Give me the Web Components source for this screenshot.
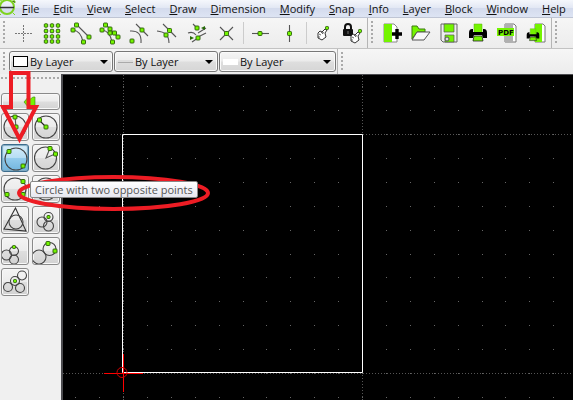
<!DOCTYPE html>
<html lang="en">
<head>
<meta charset="utf-8">
<title>CAD drawing</title>
<style>
html,body{height:100%;margin:0}
body{overflow:hidden;font:11px/16px "Open Sans","Noto Sans",sans-serif;color:#111;background:#f0f0f0}
</style>
</head>
<body>
<cad-app></cad-app>
<script>
const dot = (x, y, s = 4) => `<rect x="${x - s / 2}" y="${y - s / 2}" width="${s}" height="${s}" rx=".8" fill="#74f400" stroke="#285a08" stroke-width=".9"/>`;
const dots = (...p) => p.map(([x, y]) => dot(x, y)).join('');
const circ = (x, y, r, w = 1.1) => `<circle cx="${x}" cy="${y}" r="${r}" fill="none" stroke="#444" stroke-width="${w}"/>`;
const line = (d, c = '#555') => `<path d="${d}" fill="none" stroke="${c}" stroke-width="1.1"/>`;
const hand = (x, y) => `<g transform="translate(${x} ${y})"><path d="M-5-1L-3-3-1-2 2-5 4-4 2-1 3 3-1 6-5 4Z" fill="#fff" stroke="#333" stroke-width="1"/><path d="M-4 0L-2 1M-2-2L0 0M-5 3L-3 3M-1-2L1-1" stroke="#444" stroke-width=".8"/>${dot(4, -6, 3)}</g>`;
const printer = `<path d="M-4-9H4V0H-4Z" fill="#74f400" stroke="#5aad10" stroke-width=".5"/><path d="M-9 0Q-9-4-6-4H-5V-1H5V-4H6Q9-4 9 0V5H5L4 2H-4L-5 5H-9Z" fill="#000"/><path d="M-4 3H4L5 8H-5Z" fill="#74f400" stroke="#222" stroke-width=".8"/>`;

const ICONS = {
  free: `<path d="M-8 .5H9M.5-8V9" stroke="#777" stroke-dasharray="2 1"/>`,
  grid: [-7.5, -2, 3.5, 8.5].map(y => [-6, 0, 6].map(x => dot(x, y, 3.4)).join('')).join(''),
  end: line('M-4-8L8 4M-8-3Q0-2 2 9') + dots([-4.5, -8], [8, 4], [-8, -3], [2.5, 9]),
  entity: line('M-4-8L8 4M-8-3Q0-2 2 9') + dots([-4.5, -8], [0, -4], [-8, -3], [0, 0], [4.5, 0], [8, 4], [2.5, 9]),
  perp: line('M-9-2Q3-3 2 10M-3-9L9 3') + dots([-7, 8], [3, -3]),
  cross: line('M-11-2Q1-1 1 10M-5-9L8 4') + dots([1.5, -2.5], [-2, 2]),
  auto: line('M-9 0Q-4-2 -1 2M-4-9L0-5M1 0L9-5M1 4L9 0M-5 9L1 5') + dots([0, -5], [1, 5]) + `<path d="M-7 3L-3 5-7 7ZM8-7L4-5 8-3Z" fill="#276b08"/>`,
  inter: line('M-6-6L7 7M7-6L-6 7') + dot(.5, .5),
  horiz: line('M-8 .5H9') + dot(0, .5),
  vert: line('M.5-8V9') + dot(.5, .5),
  rel: hand(0, 1),
  lock: `<path d="M-7-4V-6A3 3 0 0 1-1-6V-4" fill="none" stroke="#111" stroke-width="2"/><rect x="-9" y="-4" width="10" height="7" rx="1" fill="#111"/><path d="M-4-2V1" stroke="#777"/>` + hand(4, 4),
  neu: `<path d="M-7-9H3L6-6V9H-7Z" fill="#fff" stroke="#888"/><path d="M-7-9H1V9H-7Z" fill="#74f400"/><path d="M6-4V6M1 1H11" stroke="#000" stroke-width="3.4"/>`,
  open: `<path d="M-8 6V-7H-3L-1-4H5V-1H-3Z" fill="#74f400" stroke="#3c7a10"/><path d="M-8 7L-3-1H10L4 7Z" fill="#f8f8f8" stroke="#555"/>`,
  save: `<path d="M-8-9H8V9H-6L-8 7Z" fill="#eee" stroke="#666"/><path d="M-5-9H5V-1H-5Z" fill="#74f400" stroke="#555" stroke-width=".7"/><path d="M-4 2H5V9H-4Z" fill="#74f400" stroke="#555" stroke-width=".7"/><circle cx="-2" cy="6" r="2" fill="#ddd" stroke="#555"/>`,
  print: printer,
  pdf: `<path d="M-2-9H7L9-7V9H-2Z" fill="#fff" stroke="#777"/><path d="M-2-9H6V9H-2Z" fill="#b0b0b0"/><rect x="-10" y="-5" width="17" height="8" fill="#74f400"/><text x="-9" y="2" font-family="DejaVu Sans,sans-serif" font-weight="bold" font-size="7">PDF</text>`,
  preview: `<path d="M-1-9H7L9-7V9H-1Z" fill="#fff" stroke="#777"/><path d="M-1-9H6V9H-1Z" fill="#74f400"/><g transform="translate(-3 2) scale(.7)">${printer}</g>`,
  more: `<rect x="3" y="-6" width="8" height="11" fill="#111"/>`,
  back: `<path d="M-6 0L-1-6V-2L3-5H5V5H1L-1 3V6Z" fill="#74f400" stroke="#3c7a10" stroke-width=".6"/>`,
  c1: circ(0, 0, 11) + line('M0-10L1 0') + dots([0, -10], [1, 0]),
  c2: circ(0, 0, 11) + line('M-7-7L0 0', '#222') + dots([-6.5, -7], [0, 0]),
  c3: circ(1, 1, 11) + dots([-6, -6.5], [8, 8]),
  c4: circ(-.5, 0, 11) + line('M4-10L0 0 9-4') + dots([4, -9.5], [9.5, -4]),
  c5: circ(0, 0, 11) + dots([8, -7.5], [-8, 5.5], [8, 5.5]),
  c6: circ(0, 0, 11) + dots([0, 0]),
  c7: line('M.5-12L11 11-11 9Z', '#333') + circ(1, 2, 7),
  c8: circ(2.5, -3, 4.5) + circ(-4, 2, 5) + circ(2.5, 6, 5) + dot(2.5, -3, 3),
  c9: circ(-1, 0, 4.5) + circ(-8.5, 4, 5) + circ(-1, 8.5, 4.5) + dot(-1, -4, 3),
  c10: circ(-7, 6, 7) + circ(3.5, -2, 6.5) + dots([2, -7.5], [9, 0]),
  c11: circ(-7, 5, 4.5) + circ(0, -1, 4.5) + circ(5, 6, 4.5) + circ(7, -6.5, 4.5) + dot(0, -1, 3)
};

const define = (name, html, init) => customElements.define(name, class extends HTMLElement {
  connectedCallback() {
    if (this.shadowRoot) return;
    this.attachShadow({ mode: 'open' }).innerHTML = typeof html === 'function' ? html(this) : html;
    if (init) init(this.shadowRoot, this);
  }
});

define('cad-icon', el => `<style>:host{display:block;width:29px;height:30px}svg{display:block;width:100%;height:100%}</style>
<svg viewBox="-14 -15 29 30" aria-hidden="true">${ICONS[el.getAttribute('name')]}</svg>`);

define('menu-item', el => `<style>:host{display:block}button{all:unset;display:block;font:inherit;cursor:default;white-space:nowrap}</style>
<button type="button"><u>${el.getAttribute('label')[0]}</u>${el.getAttribute('label').slice(1)}</button>`);

define('menu-bar', `<style>
:host{display:flex;align-items:center;height:17px;background:linear-gradient(#f5f7fc,#e3e8f4 45%,#d4dbed 50%,#dde4f3);border-bottom:1px solid #bfc5d4;overflow:hidden}
svg{flex:none;width:16px;height:17px;margin-right:6px}
nav{display:flex;gap:14px}</style>
<svg viewBox="0 0 16 17" aria-hidden="true"><circle cx="7" cy="7" r="7" fill="none" stroke="#7ed321" stroke-width="2"/><path d="M14 1V-1M1 14L-1 16M13 13L15 15M0 1L2 0M12 1H15V3" stroke="#7ed321"/><path d="M0 7.500H14" stroke="#333" stroke-width="1.500"/></svg>
<nav><slot></slot></nav>`);

define('tool-grip', `<style>:host{display:block;flex:none;width:3px;align-self:stretch;margin:3px;background:radial-gradient(circle at 1px 1px,#aaa 1px,transparent 1px) 0 0/3px 4px}
:host([flat]){width:auto;height:3px;margin:0;background-size:4px 3px}</style>`);

define('tool-line', `<style>:host{display:block;flex:none;width:1px;height:22px;margin:0 2px;background:#ccc}
:host([full]){height:auto;align-self:stretch;margin:0;background:#b5b5b5}</style>`);

define('tool-button', el => `<style>:host{display:block;flex:none}button{all:unset;display:block}</style>
<button type="button" aria-label="${el.title}"><cad-icon name="${el.getAttribute('icon')}"></cad-icon></button>`);

define('tool-bar', `<style>:host{display:flex;align-items:center;height:30px;background:linear-gradient(#f6f6f6,#ececec);border-bottom:1px solid #c2c2c2;overflow:hidden}
:host([short]){height:25px;border-bottom:0}</style><slot></slot>`);

define('property-select', el => `<style>
:host{display:grid;flex:none;width:104px;height:21px;margin-right:1px;align-items:center}
:host([wide]){width:117px}
select,.swatch,.arrow{grid-area:1/1}
select{appearance:none;box-sizing:border-box;width:100%;height:100%;margin:0;padding:0 16px 0 20px;font:inherit;color:#111;border:1px solid #777;border-radius:3px;background:linear-gradient(#f5f5f5,#ebebeb 48%,#dedede 52%,#d6d6d6);box-shadow:inset 0 0 0 1px #fafafa}
.swatch{z-index:1;margin-left:4px;width:15px;height:11px;box-sizing:border-box;pointer-events:none}
.color{background:#fff;border:1px solid #000}
.width{height:3px;background:#ddd;border-bottom:1px solid #aaa}
.style{height:6px;background:#fff}
.arrow{z-index:1;justify-self:end;margin-right:5px;border:4px solid transparent;border-top-color:#000;border-bottom:0;pointer-events:none}</style>
<select aria-label="${el.getAttribute('label')}"><option>By Layer</option><option>By Block</option></select>
<span class="swatch ${el.getAttribute('kind')}"></span><span class="arrow"></span>`);

define('dock-button', el => `<style>
:host{display:block;min-width:0}
button{all:unset;box-sizing:border-box;display:flex;align-items:center;justify-content:center;width:100%;height:28px;overflow:hidden;border:1px solid #8a8a8a;border-radius:3px;background:linear-gradient(#f4f4f4,#ececec 48%,#dedede 52%,#d2d2d2);box-shadow:inset 0 0 0 1px #f8f8f8}
:host([wide]){grid-column:1/-1}
:host([wide]) button{height:17px}
:host([pressed]) button{border-color:#3c6c8c;background:linear-gradient(#d8eefa,#b8def4 48%,#92cbec 52%,#72b5dd);box-shadow:inset 0 0 1px 1px #7fa9c0}
cad-icon{flex:none}</style>
<button type="button" aria-label="${el.title}"><cad-icon name="${el.getAttribute('icon')}"></cad-icon></button>`);

define('tool-dock', `<style>
:host{display:block;flex:none;width:59px;padding:3px 1px 0 1px;background:#f0f0f0}
div{display:grid;grid-template-columns:repeat(2,minmax(0,1fr));gap:3px;margin-top:13px}</style>
<tool-grip flat></tool-grip><div><slot></slot></div>`);

define('drawing-canvas', `<style>
:host{display:block;flex:1;min-width:0;background:#000;border:solid #4c4c50;border-width:1px 0 0 2px;overflow:hidden}
svg{display:block;width:100%;height:100%}</style>
<svg role="img" aria-label="Drawing with a square"><g transform="translate(-63 -75)" fill="none">
<path class="grid" stroke="#666"/>
<path d="M123.500 75V3000M362.500 75V3000M63 134.500H4000M63 373.500H4000" stroke="#555" stroke-dasharray="1 2"/>
<path d="M122.500 134.500H362.500V372.500H122.500Z" stroke="#fff"/>
<path d="M104 373.500H143M123.500 354V392" stroke="#f00"/>
<circle cx="122" cy="372.500" r="5" stroke="#d00000"/></g></svg>`, root => {
  let d = '';
  for (let i = -2; i < 100; i++) for (let j = -12; j < 60; j++)
    d += `M${Math.round(123 + i * 23.9)} ${Math.round(373 + j * 23.9)}.5h1`;
  root.querySelector('.grid').setAttribute('d', d);
});

define('tool-tip', `<style>:host{position:absolute;left:30px;top:181px;z-index:3;box-sizing:border-box;height:17px;padding:0 4px;font-size:11px;line-height:15px;white-space:nowrap;color:#555;background:linear-gradient(#fff,#e6e7f0);border:1px solid #888;border-radius:2px}</style><span role="tooltip"><slot></slot></span>`);

define('red-marks', `<style>:host{position:absolute;left:0;top:0;z-index:2;pointer-events:none}svg{display:block}</style>
<svg width="220" height="220" fill="none" stroke="#ed1c24" stroke-width="4" aria-hidden="true"><path d="M11 73H28.500V107H36L19.500 139 3 107H11Z"/><ellipse cx="113.500" cy="193" rx="94.500" ry="16"/></svg>`);

const tools = list => list.map(([i, t]) => `<tool-button icon="${i}" title="${t}"></tool-button>`).join('');
define('cad-app', `<style>
:host{position:relative;display:flex;flex-direction:column;height:100%;overflow:hidden}
menu-bar,tool-bar{flex:none}
main{flex:1;display:flex;min-height:0}</style>
<menu-bar>${['File', 'Edit', 'View', 'Select', 'Draw', 'Dimension', 'Modify', 'Snap', 'Info', 'Layer', 'Block', 'Window', 'Help'].map(m => `<menu-item label="${m}"></menu-item>`).join('')}</menu-bar>
<tool-bar><tool-grip></tool-grip>
${tools([['free', 'Free snap'], ['grid', 'Snap on grid'], ['end', 'Snap on endpoints'], ['entity', 'Snap on entity'], ['perp', 'Snap perpendicular'], ['cross', 'Snap on middle'], ['auto', 'Snap distance'], ['inter', 'Snap intersection']])}<tool-line></tool-line>
${tools([['horiz', 'Restrict horizontal'], ['vert', 'Restrict vertical']])}<tool-line></tool-line>
${tools([['rel', 'Set relative zero'], ['lock', 'Lock relative zero']])}<tool-line full></tool-line><tool-grip></tool-grip>
${tools([['neu', 'New'], ['open', 'Open'], ['save', 'Save'], ['print', 'Print'], ['pdf', 'Export PDF'], ['preview', 'Print preview']])}<tool-line full></tool-line><tool-grip></tool-grip>
${tools([['more', 'More']])}</tool-bar>
<tool-bar short><tool-grip></tool-grip>
<property-select kind="color" label="Color"></property-select><property-select kind="width" label="Line width"></property-select><property-select kind="style" label="Line type" wide></property-select>
<tool-line full></tool-line><tool-grip></tool-grip></tool-bar>
<main><tool-dock>
<dock-button wide icon="back" title="Back"></dock-button>
${['Center, point', 'Center, radius', 'Two points', 'Two points, radius', 'Three points', 'Concentric', 'Inscribed', 'Tangent two circles, radius', 'Tangent two circles, point', 'Tangent circle, two points', 'Tangent three circles'].map((t, i) => `<dock-button icon="c${i + 1}" title="${t}"${i === 2 ? ' pressed' : ''}></dock-button>`).join('')}
</tool-dock><drawing-canvas></drawing-canvas></main>
<red-marks></red-marks><tool-tip>Circle with two opposite points</tool-tip>`);
</script>
</body>
</html>
